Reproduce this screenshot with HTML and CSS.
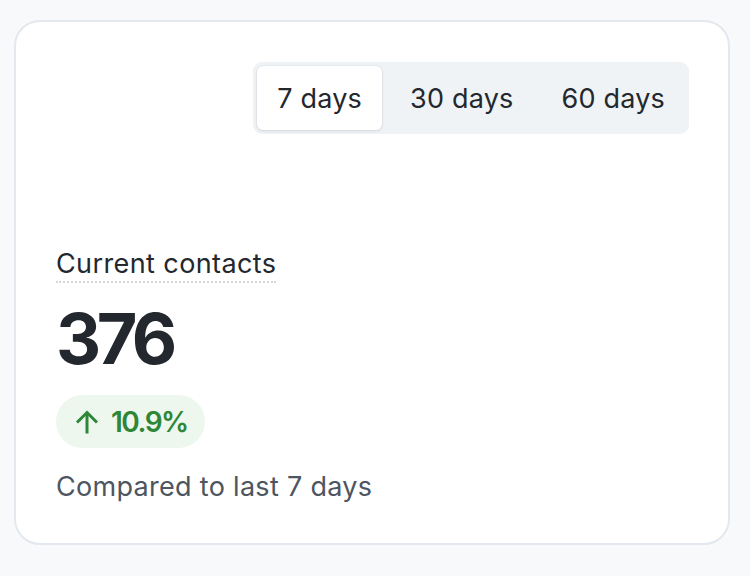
FILE: index.html
```html
<!DOCTYPE html>
<html>
<head>
<meta charset="utf-8">
<link rel="stylesheet" href="styles.css">
</head>
<body>
<div class="card">
  <div class="toolbar">
    <div class="segmented">
      <button class="seg active">7 days</button>
      <button class="seg">30 days</button>
      <button class="seg">60 days</button>
    </div>
  </div>
  <div class="stat">
    <div class="label"><span class="label-text">Current contacts</span></div>
    <div class="value">376</div>
    <div class="badge">
      <svg class="arrow" width="24" height="24" viewBox="0 0 24 24" fill="none" stroke="currentColor" stroke-width="3" stroke-linecap="butt" stroke-linejoin="miter"><path d="M12 23.5V2.5"/><path d="M2 12.5l10-10 10 10"/></svg>
      <span>10.9%</span>
    </div>
    <div class="note">Compared to last 7 days</div>
  </div>
</div>
</body>
</html>
```
FILE: styles.css
```css
html, body {
  margin: 0;
  padding: 0;
  background: #f8f9fb;
}
body {
  font-family: Inter, "Noto Sans", sans-serif;
  color: #23272e;
}
.card {
  box-sizing: border-box;
  margin: 20px 0 0 14px;
  width: 716px;
  height: 525px;
  background: #ffffff;
  border: 2px solid #e3e8ee;
  border-radius: 26px;
  padding: 40px 39px 40px 40px;
  display: flex;
  flex-direction: column;
  justify-content: space-between;
}
.toolbar {
  display: flex;
  justify-content: flex-end;
}
.segmented {
  display: flex;
  gap: 8px;
  padding: 4px;
  background: #eff3f6;
  border-radius: 9px;
}
.seg {
  font-family: inherit;
  font-size: 27px;
  letter-spacing: 0.2px;
  color: #23272e;
  background: transparent;
  border: 0;
  height: 64px;
  padding: 0 20px;
  border-radius: 6px;
  cursor: pointer;
}
.seg.active {
  background: #ffffff;
  box-shadow: 0 1px 3px rgba(16, 24, 40, 0.10), 0 0 0 1px rgba(16, 24, 40, 0.03);
}
.stat {
  display: flex;
  flex-direction: column;
  align-items: flex-start;
}
.label {
  font-size: 27px;
  line-height: 32px;
  letter-spacing: 0.4px;
}
.label-text {
  border-bottom: 2px dotted #d3d7dc;
  padding-bottom: 1px;
}
.value {
  font-size: 70px;
  font-weight: 700;
  line-height: 72px;
  margin-top: 23px;
  letter-spacing: -4.5px;
}
.badge {
  margin-top: 20px;
  display: flex;
  align-items: center;
  gap: 12px;
  height: 53px;
  padding: 0 17px 0 19px;
  border-radius: 27px;
  background: #edf7ee;
  color: #2e8636;
  font-size: 28px;
  font-weight: 600;
  letter-spacing: -1.5px;
}
.note {
  margin-top: 23px;
  font-size: 27px;
  line-height: 32px;
  letter-spacing: 0.3px;
  color: #4d5560;
}
```
